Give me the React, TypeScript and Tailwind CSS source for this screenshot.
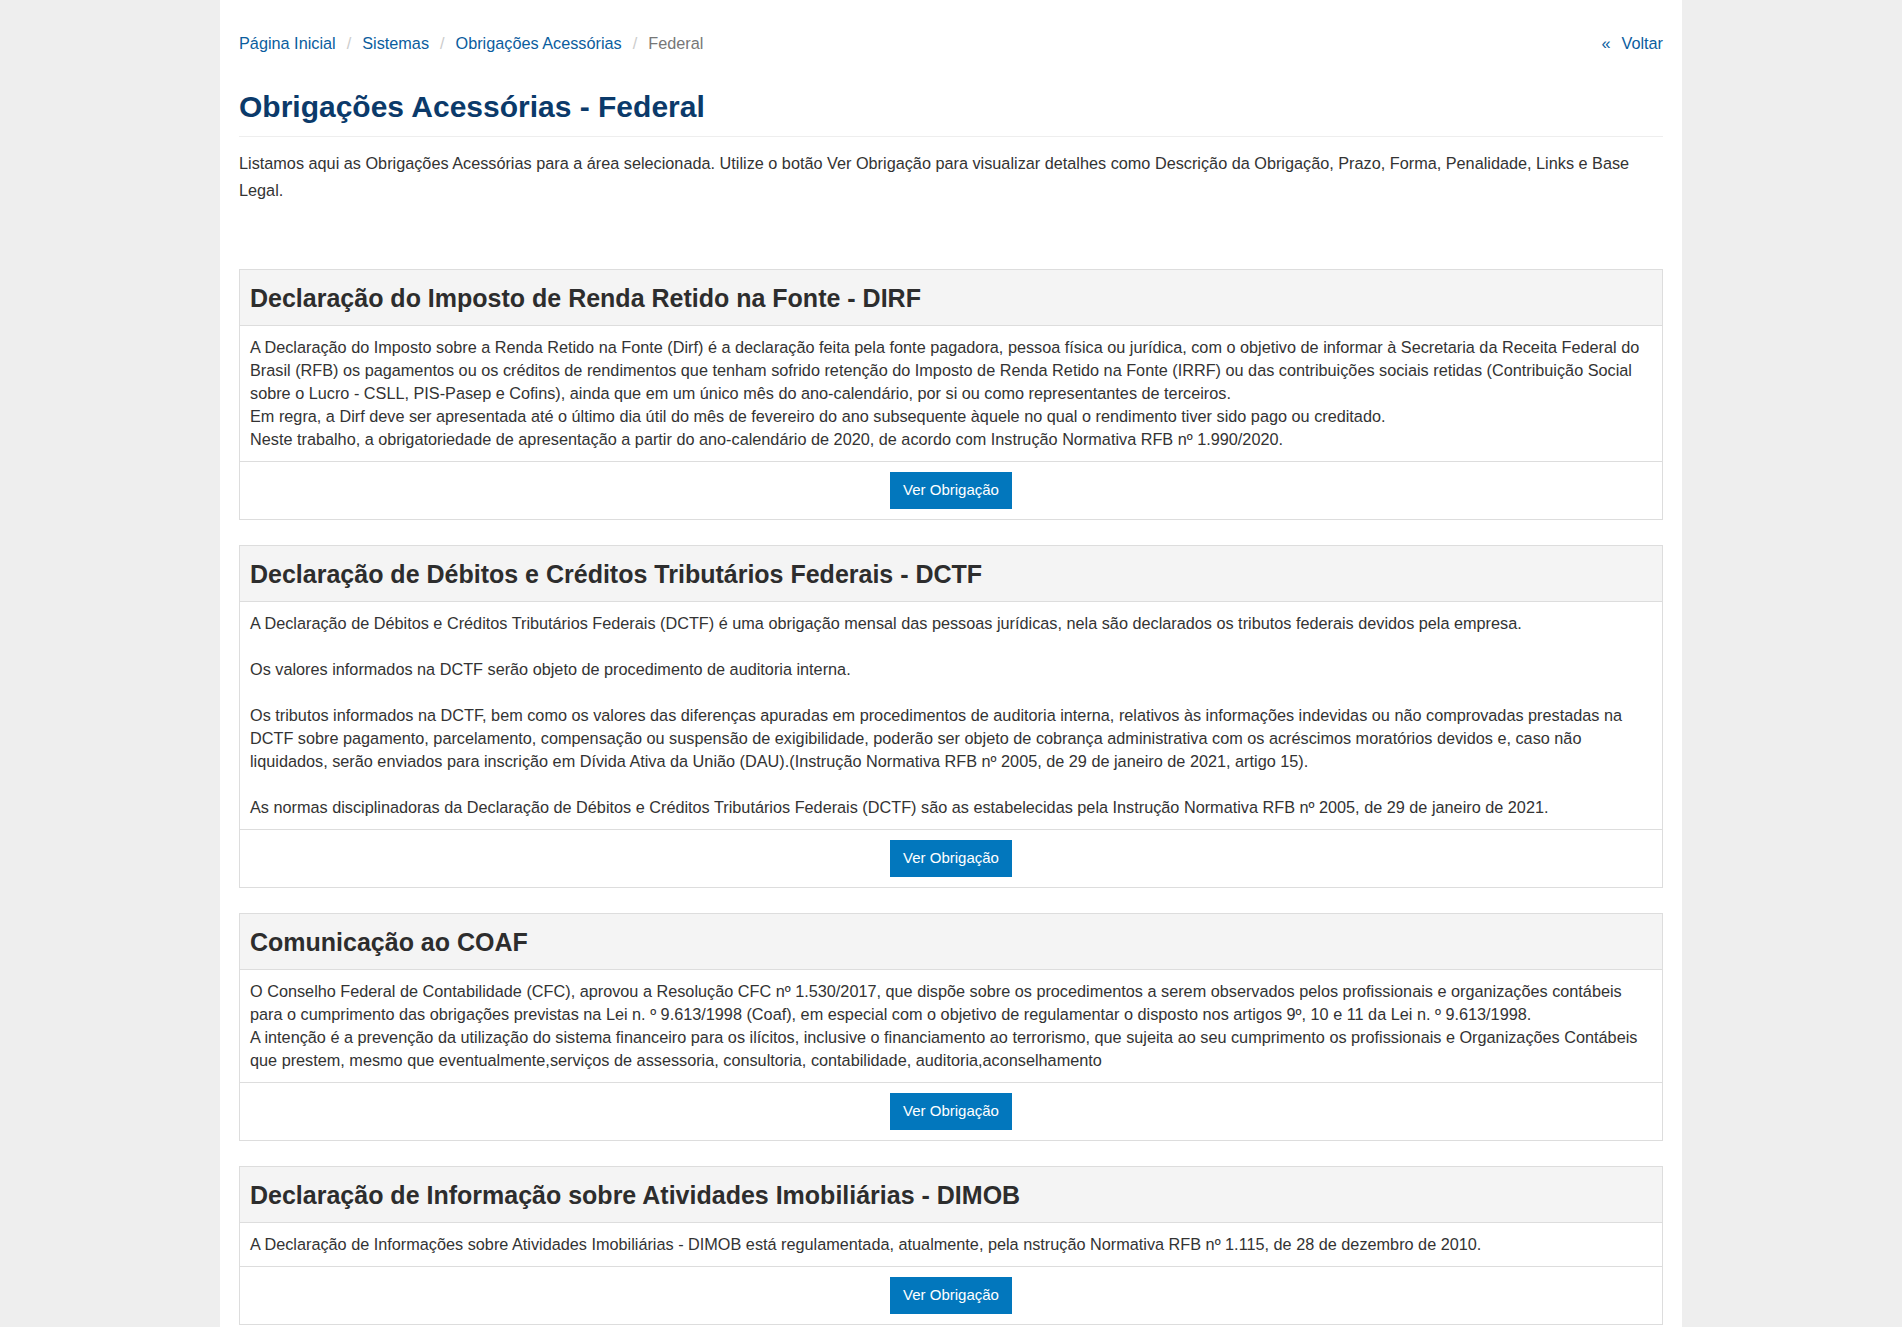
import React from 'react';

interface Obrigacao {
  id: string;
  title: string;
  paragraphs: string[][];
}

const obrigacoes: Obrigacao[] = [
  {
    id: 'dirf',
    title: 'Declaração do Imposto de Renda Retido na Fonte - DIRF',
    paragraphs: [
      [
        'A Declaração do Imposto sobre a Renda Retido na Fonte (Dirf) é a declaração feita pela fonte pagadora, pessoa física ou jurídica, com o objetivo de informar à Secretaria da Receita Federal do Brasil (RFB) os pagamentos ou os créditos de rendimentos que tenham sofrido retenção do Imposto de Renda Retido na Fonte (IRRF) ou das contribuições sociais retidas (Contribuição Social sobre o Lucro - CSLL, PIS-Pasep e Cofins), ainda que em um único mês do ano-calendário, por si ou como representantes de terceiros.',
        'Em regra, a Dirf deve ser apresentada até o último dia útil do mês de fevereiro do ano subsequente àquele no qual o rendimento tiver sido pago ou creditado.',
        'Neste trabalho, a obrigatoriedade de apresentação a partir do ano-calendário de 2020, de acordo com Instrução Normativa RFB nº 1.990/2020.',
      ],
    ],
  },
  {
    id: 'dctf',
    title: 'Declaração de Débitos e Créditos Tributários Federais - DCTF',
    paragraphs: [
      ['A Declaração de Débitos e Créditos Tributários Federais (DCTF) é uma obrigação mensal das pessoas jurídicas, nela são declarados os tributos federais devidos pela empresa.'],
      ['Os valores informados na DCTF serão objeto de procedimento de auditoria interna.'],
      ['Os tributos informados na DCTF, bem como os valores das diferenças apuradas em procedimentos de auditoria interna, relativos às informações indevidas ou não comprovadas prestadas na DCTF sobre pagamento, parcelamento, compensação ou suspensão de exigibilidade, poderão ser objeto de cobrança administrativa com os acréscimos moratórios devidos e, caso não liquidados, serão enviados para inscrição em Dívida Ativa da União (DAU).(Instrução Normativa RFB nº 2005, de 29 de janeiro de 2021, artigo 15).'],
      ['As normas disciplinadoras da Declaração de Débitos e Créditos Tributários Federais (DCTF) são as estabelecidas pela Instrução Normativa RFB nº 2005, de 29 de janeiro de 2021.'],
    ],
  },
  {
    id: 'coaf',
    title: 'Comunicação ao COAF',
    paragraphs: [
      [
        'O Conselho Federal de Contabilidade (CFC), aprovou a Resolução CFC nº 1.530/2017, que dispõe sobre os procedimentos a serem observados pelos profissionais e organizações contábeis para o cumprimento das obrigações previstas na Lei n. º 9.613/1998 (Coaf), em especial com o objetivo de regulamentar o disposto nos artigos 9º, 10 e 11 da Lei n. º 9.613/1998.',
        'A intenção é a prevenção da utilização do sistema financeiro para os ilícitos, inclusive o financiamento ao terrorismo, que sujeita ao seu cumprimento os profissionais e Organizações Contábeis que prestem, mesmo que eventualmente,serviços de assessoria, consultoria, contabilidade, auditoria,aconselhamento',
      ],
    ],
  },
  {
    id: 'dimob',
    title: 'Declaração de Informação sobre Atividades Imobiliárias - DIMOB',
    paragraphs: [
      ['A Declaração de Informações sobre Atividades Imobiliárias - DIMOB está regulamentada, atualmente, pela nstrução Normativa RFB nº 1.115, de 28 de dezembro de 2010.'],
    ],
  },
];

const crumbs = ['Página Inicial', 'Sistemas', 'Obrigações Acessórias'];

const ObrigacaoCard: React.FC<{ item: Obrigacao }> = ({ item }) => (
  <div className="mb-[25px] border border-[#dddddd] bg-white">
    {/* Heading */}
    <div className="flex h-[56px] items-center border-b border-[#dddddd] bg-[#f4f4f4] px-[10px]">
      <h3 className="pt-[1px] text-[25px] font-bold leading-none text-[#2d2d2d]">{item.title}</h3>
    </div>

    {/* Body */}
    <div className="flex flex-col gap-[23px] px-[10px] py-[10px] text-[16.25px] leading-[23px] text-[#333333]">
      {item.paragraphs.map((block, i) => (
        <div key={i}>
          {block.map((line, j) => (
            <p key={j}>{line}</p>
          ))}
        </div>
      ))}
    </div>

    {/* Footer */}
    <div className="flex justify-center border-t border-[#dddddd] py-[10px]">
      <button className="h-[37px] bg-[#0277bd] px-[13px] text-[15px] text-white hover:bg-[#01609a]">
        Ver Obrigação
      </button>
    </div>
  </div>
);

export default function App() {
  return (
    <div className="min-h-screen bg-[#eeeeee] font-['Liberation_Sans',Arial,sans-serif]">
      <div className="mx-auto min-h-screen w-[1462px] bg-white px-[19px] pt-[32px] pb-10">
        {/* Breadcrumb */}
        <div className="flex items-center justify-between text-[16.25px] leading-[22px]">
          <nav className="flex items-center">
            {crumbs.map((c) => (
              <React.Fragment key={c}>
                <a href="#" className="text-[#0b5d9e] hover:underline">
                  {c}
                </a>
                <span className="mx-[11px] text-[#cccccc]">/</span>
              </React.Fragment>
            ))}
            <span className="text-[#777777]">Federal</span>
          </nav>
          <a href="#" className="flex items-center gap-[11px] text-[#0b5d9e]">
            <span>«</span>
            <span>Voltar</span>
          </a>
        </div>

        {/* Title */}
        <h1 className="mt-[36px] border-b border-[#eeeeee] pb-[12px] text-[30px] font-bold leading-[34px] text-[#0b3a6a]">
          Obrigações Acessórias - Federal
        </h1>

        <p className="mt-[13px] text-[16.25px] leading-[26.5px] text-[#333333]">
          Listamos aqui as Obrigações Acessórias para a área selecionada. Utilize o botão Ver Obrigação para visualizar
          detalhes como Descrição da Obrigação, Prazo, Forma, Penalidade, Links e Base Legal.
        </p>

        <div className="mt-[66px]">
          {obrigacoes.map((o) => (
            <ObrigacaoCard key={o.id} item={o} />
          ))}
        </div>
      </div>
    </div>
  );
}
